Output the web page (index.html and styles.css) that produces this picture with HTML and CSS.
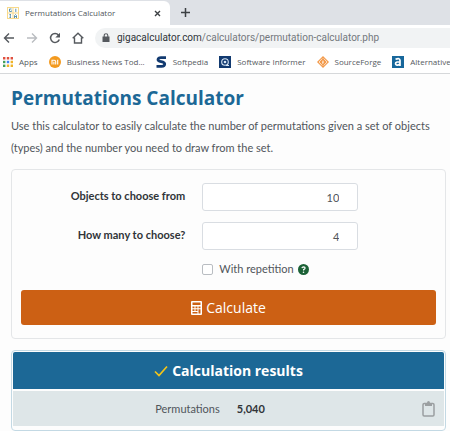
FILE: index.html
```html
<!DOCTYPE html>
<html lang="en">
<head>
<meta charset="utf-8">
<title>Permutations Calculator</title>
<link rel="stylesheet" href="styles.css">
</head>
<body>
<header class="browser">
  <div class="tabs">
    <div class="tab">
      <svg class="tab-icon" viewBox="0 0 12 12" aria-hidden="true"><path fill="#f7d98b" d="M0 0h12v12H0z"/><path fill="#fff" d="M1 1h4.500v4.500H1zM6.500 1H11v4.500H6.500zM1 6.500h4.500V11H1zM6.500 6.500H11V11H6.500z"/><path fill="none" stroke="#5f94ad" d="M4.500 2H2.500v2.500H4.500V3.500M8.800 1.700v3.300M2.500 7.500h1.500M3.300 7.500v3M2.500 10.500h1.500M7.500 11V8.500l1-1 1 1V11M7.500 9.500h2"/></svg>
      <span class="tab-title">Permutations Calculator</span>
      <button class="icon-btn" type="button" aria-label="Close tab"><svg width="7" height="7" viewBox="0 0 7 7"><path d="M1 1l5 5M6 1L1 6" fill="none" stroke="#3c4043" stroke-width="1.400"/></svg></button>
    </div>
    <button class="icon-btn new-tab" type="button" aria-label="New tab"><svg width="9" height="9" viewBox="0 0 9 9"><path d="M4.500 0v9M0 4.500h9" fill="none" stroke="#3c4043" stroke-width="1.500"/></svg></button>
  </div>
  <div class="toolbar">
    <button class="icon-btn" type="button" aria-label="Back"><svg width="12" height="12" viewBox="0 0 12 12"><path d="M11 6H2M6 1.500L1.500 6 6 10.500" fill="none" stroke="#55595e" stroke-width="1.400"/></svg></button>
    <button class="icon-btn" type="button" aria-label="Forward"><svg width="12" height="12" viewBox="0 0 12 12"><path d="M1 6h9M6 1.500L10.500 6 6 10.500" fill="none" stroke="#b9bcc0" stroke-width="1.400"/></svg></button>
    <button class="icon-btn" type="button" aria-label="Reload"><svg width="12" height="12" viewBox="0 0 12 12"><path d="M10.300 7.500A4.500 4.500 0 1 1 9.500 3" fill="none" stroke="#55595e" stroke-width="1.500"/><path fill="#55595e" d="M11 .8v4.700H6.300z"/></svg></button>
    <button class="icon-btn" type="button" aria-label="Home"><svg width="12" height="12" viewBox="0 0 12 12"><path d="M.7 6.300L6 1.300l5.300 5M2.500 5.500V11h7V5.500" fill="none" stroke="#55595e" stroke-width="1.400"/></svg></button>
    <div class="address">
      <svg width="8" height="9" viewBox="0 0 8 9" aria-hidden="true"><path d="M.5 3.500h7V9h-7z" fill="#55595e"/><path d="M2.200 4V2.500a1.800 1.800 0 0 1 3.600 0V4" fill="none" stroke="#55595e" stroke-width="1.100"/></svg>
      <span><b class="host">gigacalculator.com</b>/calculators/permutation-calculator.php</span>
    </div>
  </div>
  <nav class="bookmarks" aria-label="Bookmarks">
    <a href="#" class="apps"><svg width="10" height="10" viewBox="0 0 10 10"><path fill="#e0503f" d="M0 0h2.400v2.400H0zM3.800 0h2.400v2.400H3.800zM7.600 0H10v2.400H7.600z"/><path fill="#43a05c" d="M0 3.800h2.400v2.400H0z"/><path fill="#4285f4" d="M3.800 3.800h2.400v2.400H3.800z"/><path fill="#f0b429" d="M7.600 3.800H10v2.400H7.600zM3.800 7.600h2.400V10H3.800zM7.600 7.600H10V10H7.600z"/><path fill="#43a05c" d="M0 7.600h2.400V10H0z"/></svg>Apps</a>
    <a href="#" class="news"><svg width="12" height="12" viewBox="0 0 12 12"><circle cx="6" cy="6" r="6" fill="#f39a1f"/><path d="M3 8.500V4.300h2.200q1.500 0 1.500 1.300v2.900M4.900 5.800v2.700M8.700 3.800v4.700" fill="none" stroke="#fff" stroke-width="1.100"/></svg>Business News Tod...</a>
    <a href="#" class="softpedia"><svg width="11" height="12" viewBox="0 0 11 12"><path d="M10 1.700H5Q2 1.700 2 3.700C2 6.300 8.700 5 8.700 8Q8.700 10.300 5.500 10.300H.5" fill="none" stroke="#123a70" stroke-width="2.800"/></svg>Softpedia</a>
    <a href="#" class="informer"><svg width="12" height="12" viewBox="0 0 12 12"><path fill="#123a70" d="M0 0h12v12H0z"/><circle cx="6" cy="6" r="3.300" fill="none" stroke="#d9e7f5" stroke-width="1.100"/><circle cx="6" cy="6" r="1.300" fill="#d9e7f5"/><path d="M7 9.500h3" stroke="#d9e7f5"/></svg>Software Informer</a>
    <a href="#" class="forge"><svg width="12" height="12" viewBox="0 0 12 12"><path fill="#f39a4b" d="M6 0l6 6-6 6-6-6z"/><path d="M5.300 2.500L2 6l3.300 3.500M6.700 2.500L10 6 6.700 9.500" fill="none" stroke="#fff" stroke-width=".7"/><path fill="#fff" d="M6 4Q7.500 6.500 6 8.200 4.500 7 6 4"/></svg>SourceForge</a>
    <a href="#" class="alt"><svg width="12" height="12" viewBox="0 0 12 12"><path fill="#17679b" d="M0 0h12v12H0z"/><path d="M3.500 3.300Q8 1.500 8 4.500V10M8 6H5Q3.200 6.300 3.700 8.300 5 10.200 8 8" fill="none" stroke="#fff" stroke-width="1.700"/></svg>Alternative</a>
  </nav>
</header>
<main class="page">
  <h1>Permutations Calculator</h1>
  <p class="intro">Use this calculator to easily calculate the number of permutations given a set of objects (types) and the number you need to draw from the set.</p>
  <form class="calculator">
    <div class="field">
      <label for="objects">Objects to choose from</label>
      <input class="number" id="objects" type="text" inputmode="numeric" value="10">
    </div>
    <div class="field">
      <label for="choose">How many to choose?</label>
      <input class="number" id="choose" type="text" inputmode="numeric" value="4">
    </div>
    <div class="field repeat">
      <div class="option">
        <input id="repetition" type="checkbox">
        <label for="repetition">With repetition</label>
        <button class="icon-btn" type="button" aria-label="Help"><svg width="11" height="11" viewBox="0 0 11 11"><circle cx="5.500" cy="5.500" r="5.500" fill="#1b6136"/><path d="M3.900 4.200q.2-1.400 1.700-1.400 1.500.1 1.500 1.300 0 .9-1.500 1.500v.8" fill="none" stroke="#fff" stroke-width="1.200"/><circle cx="5.500" cy="8.200" r=".8" fill="#fff"/></svg></button>
      </div>
    </div>
    <button class="calculate" type="button"><svg width="11" height="14" viewBox="0 0 11 14" aria-hidden="true"><rect width="11" height="14" rx="1" fill="#fff"/><path fill="#cc6014" d="M1.500 1.500h8v2.500h-8zM1.500 5.500h2v1.700h-2zM4.500 5.500h2v1.700h-2zM7.500 5.500h2v1.700h-2zM1.500 8.200h2v1.700h-2zM4.500 8.200h2v1.700h-2zM7.500 8.200h2v4.300h-2zM1.500 10.900h5v1.600h-5z"/></svg>Calculate</button>
  </form>
  <section class="results">
    <h2><svg width="14" height="12" viewBox="0 0 14 12" aria-hidden="true"><path d="M1 6.500l4 4L13 1.500" fill="none" stroke="#f5c518" stroke-width="1.700"/></svg>Calculation results</h2>
    <div class="result">
      <span class="name">Permutations</span>
      <strong>5,040</strong>
      <button class="icon-btn" type="button" aria-label="Copy"><svg width="13" height="16" viewBox="0 0 13 16"><rect x="1" y="2.500" width="11" height="12.500" rx="1.200" fill="none" stroke="#9b9fa1" stroke-width="1.500"/><path fill="#9b9fa1" d="M3 2h2Q5 0 6.500 0T8 2h2v3H3z"/></svg></button>
    </div>
  </section>
</main>
</body>
</html>
```
FILE: styles.css
```css
* {
  box-sizing: border-box;
}

body {
  margin: 0;
  background: #fdfdfd;
  color: #50555b;
  font: 11px/22px Lato, "Noto Sans", sans-serif;
}

svg {
  display: block;
  flex: none;
}

button,
input {
  font: inherit;
  color: inherit;
}

.icon-btn {
  display: flex;
  padding: 0;
  border: 0;
  background: none;
}

.browser {
  overflow: hidden;
  background: #fff;
  border-bottom: 1px solid #d6d8da;
  font-family: "Open Sans", "Noto Sans", sans-serif;
  font-size: 8px;
}

.tabs {
  display: flex;
  align-items: center;
  height: 25px;
  background: #dee1e6;
}

.tab {
  display: flex;
  align-items: center;
  align-self: flex-end;
  width: 170px;
  height: 24px;
  padding: 0 9px 0 7px;
  background: #fff;
  border-radius: 0 6px 0 0;
}

.tab-icon {
  width: 12px;
  height: 12px;
  margin-right: 6px;
}

.tab-title {
  flex: 1;
  white-space: nowrap;
}

.new-tab {
  margin-left: 11px;
}

.toolbar {
  display: flex;
  align-items: center;
  gap: 11px;
  height: 25px;
  padding-left: 3px;
}

.address {
  display: flex;
  flex: 1;
  align-items: center;
  gap: 7px;
  height: 20px;
  padding-left: 7px;
  background: #f1f3f4;
  border-radius: 10px 0 0 10px;
  font-family: Roboto, "Noto Sans", sans-serif;
  font-size: 10px;
  color: #74787d;
}

.host {
  font-weight: 400;
  color: #303438;
}

.bookmarks {
  display: flex;
  align-items: center;
  gap: 11px;
  height: 23px;
  padding-left: 3px;
}

.bookmarks a {
  display: flex;
  flex: none;
  align-items: center;
  gap: 6px;
  color: #55595e;
  text-decoration: none;
}

.page {
  padding: 12px 4px 0 11px;
}

h1 {
  margin: 0 0 5px;
  color: #1c6896;
  font-family: "Open Sans", "Noto Sans", sans-serif;
  font-size: 19px;
  line-height: 24px;
}

.intro {
  margin: 0 0 10px;
}

.calculator {
  padding: 13px 9px;
  border: 1px solid #e4e6e8;
  border-radius: 4px;
}

.field {
  display: grid;
  grid-template-columns: 42% 156px;
  column-gap: 7px;
  align-items: center;
  margin-bottom: 11px;
}

.field > label {
  padding: 0 10px 3px 0;
  color: #303438;
  font-weight: 700;
  text-align: right;
}

.number {
  width: 100%;
  height: 28px;
  padding: 0 18px;
  background: #fff;
  border: 1px solid #d9dde2;
  border-radius: 3px;
  text-align: right;
}

.option {
  display: flex;
  grid-column: 2;
  align-items: center;
  gap: 4px;
  height: 16px;
}

.option input {
  appearance: none;
  width: 11px;
  height: 11px;
  margin: 0 2px 0 0;
  background: #fff;
  border: 1px solid #b9bdc2;
  border-radius: 2px;
}

.repeat {
  margin-bottom: 13px;
}

.calculate {
  display: flex;
  align-items: center;
  justify-content: center;
  gap: 4px;
  width: 100%;
  height: 35px;
  padding: 0;
  background: #cc6014;
  border: 0;
  border-radius: 3px;
  color: #fff;
  font-family: "Open Sans", "Noto Sans", sans-serif;
  font-size: 14px;
}

.results {
  margin-top: 11px;
  padding: 1px 1px 4px;
  border: 1px solid #c3d9e4;
  border-radius: 4px;
}

h2 {
  display: flex;
  align-items: center;
  justify-content: center;
  gap: 4px;
  height: 37px;
  margin: 0 0 2px;
  background: #1c6896;
  border-radius: 2px 2px 0 0;
  color: #fff;
  font-family: "Open Sans", "Noto Sans", sans-serif;
  font-size: 14px;
}

.result {
  display: grid;
  grid-template-columns: 49% 1fr auto;
  column-gap: 17px;
  align-items: center;
  height: 35px;
  padding-right: 9px;
  background: #dee6e8;
}

.name {
  text-align: right;
}

.result strong {
  color: #303438;
}
```
